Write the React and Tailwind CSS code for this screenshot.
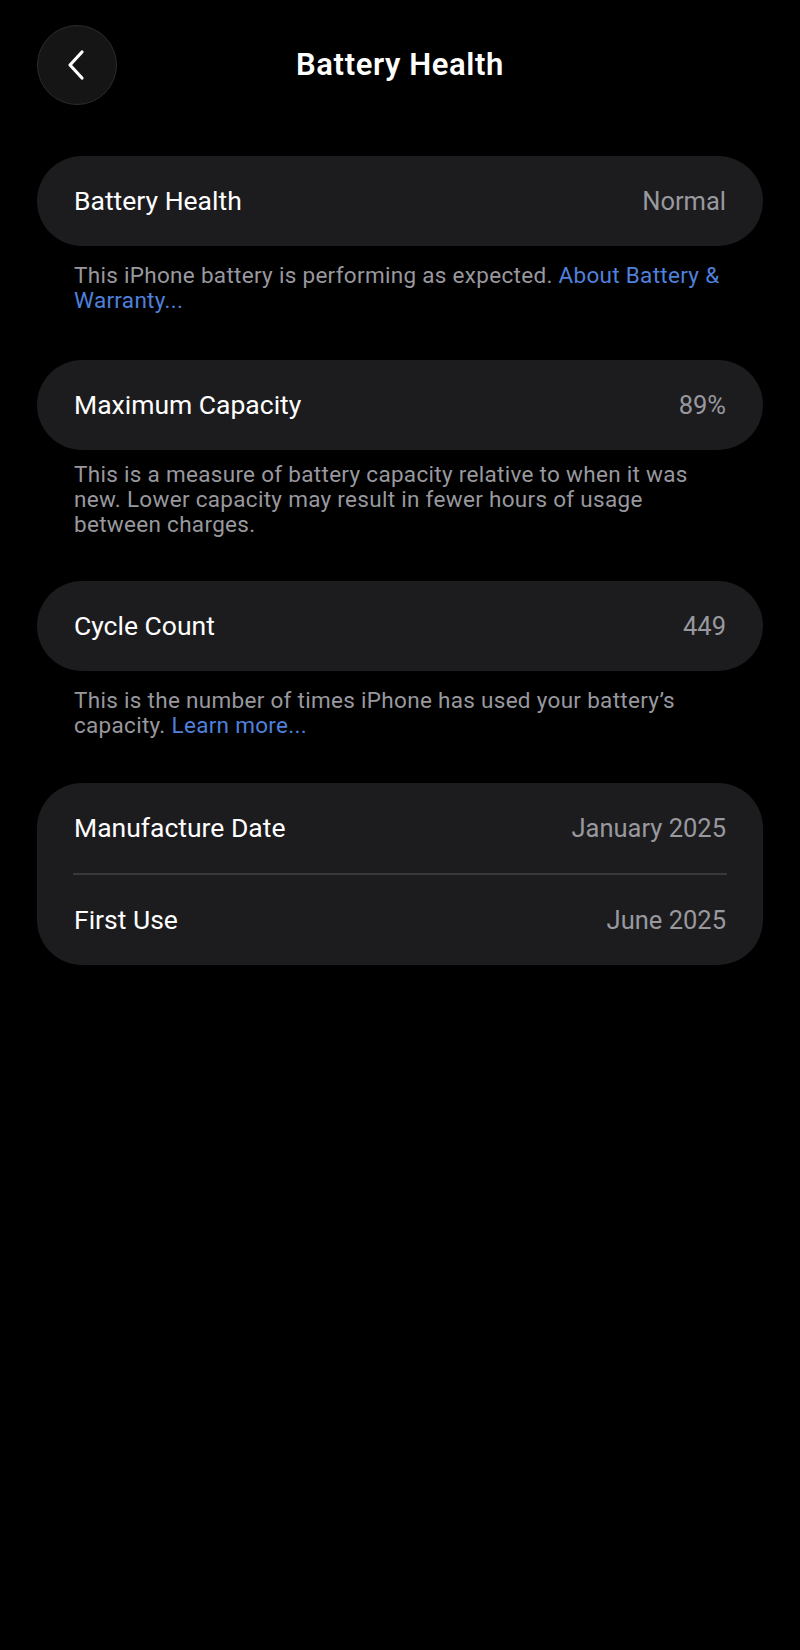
import React from 'react';

function Row({ label, value }) {
  return (
    <div className="flex items-center justify-between h-[90px] px-[37px]">
      <span className="text-[26.5px] text-white">{label}</span>
      <span className="text-[25.5px] text-[#98989e]">{value}</span>
    </div>
  );
}

function Card({ children }) {
  return <div className="rounded-[45px] bg-[#1c1c1e] overflow-hidden">{children}</div>;
}

function Note({ children, tight }) {
  return (
    <p
      className={
        tight
          ? 'px-[37px] pt-[12px] text-[22.5px] leading-[25px] text-[#98989e] tracking-[0.3px]'
          : 'px-[37px] pt-[17px] text-[22.5px] leading-[25px] text-[#98989e] tracking-[0.3px]'
      }
    >
      {children}
    </p>
  );
}

function Link({ children }) {
  return <span className="text-[#4f80dc]">{children}</span>;
}

export default function App() {
  return (
    <div
      className="min-h-[1650px] bg-black text-white"
      style={{ fontFamily: 'Roboto, "Liberation Sans", sans-serif' }}
    >
      {/* header */}
      <div className="relative flex items-center justify-center h-[130px]">
        <button className="absolute left-[37px] top-[25px] w-[80px] h-[80px] rounded-full bg-[#151515] border border-[#2c2c2e] flex items-center justify-center">
          <svg width="22" height="34" viewBox="0 0 22 34" fill="none">
            <path d="M16 4 L4 17 L16 30" stroke="white" strokeWidth="3.2" strokeLinecap="round" strokeLinejoin="round" />
          </svg>
        </button>
        <h1 className="text-[31px] font-semibold tracking-[0.6px]">Battery Health</h1>
      </div>

      <div className="px-[37px] pt-[26px]">
        <Card>
          <Row label="Battery Health" value="Normal" />
        </Card>
        <Note>
          This iPhone battery is performing as expected. <Link>About Battery &amp; Warranty...</Link>
        </Note>

        <div className="mt-[47px]">
          <Card>
            <Row label="Maximum Capacity" value="89%" />
          </Card>
        </div>
        <Note tight>
          This is a measure of battery capacity relative to when it was new. Lower capacity may result in fewer hours of usage between charges.
        </Note>

        <div className="mt-[44px]">
          <Card>
            <Row label="Cycle Count" value="449" />
          </Card>
        </div>
        <Note>
          This is the number of times iPhone has used your battery’s capacity. <Link>Learn more...</Link>
        </Note>

        <div className="mt-[45px]">
          <Card>
            <Row label="Manufacture Date" value="January 2025" />
            <div className="mx-[36px] h-[2px] bg-[#38383a]" />
            <Row label="First Use" value="June 2025" />
          </Card>
        </div>
      </div>
    </div>
  );
}
